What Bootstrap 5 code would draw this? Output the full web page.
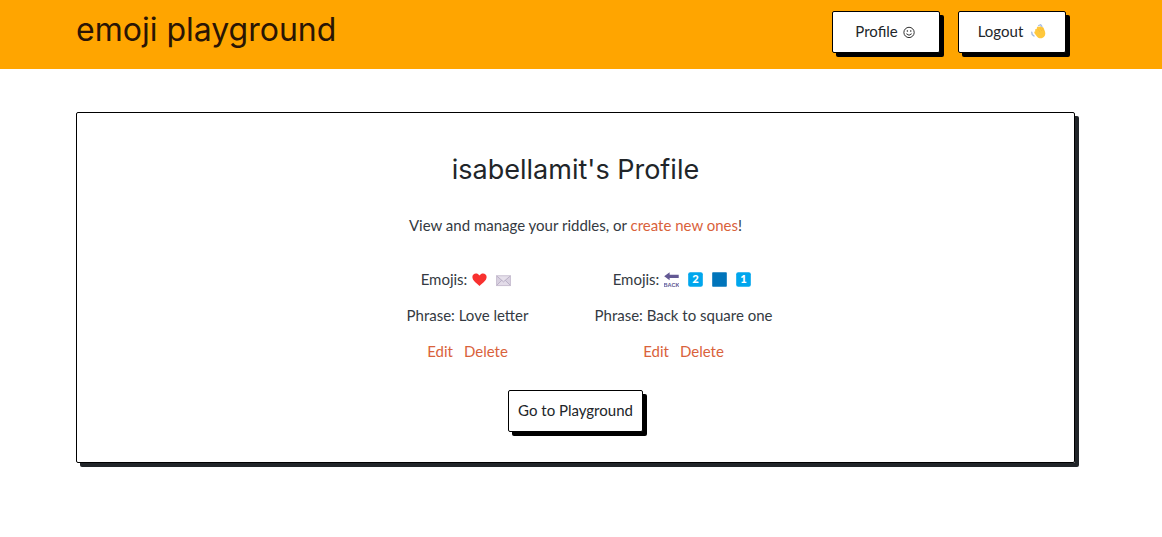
<!DOCTYPE html>
<html lang="en">
<head>
<meta charset="utf-8">
<meta name="viewport" content="width=device-width, initial-scale=1">
<title>emoji playground</title>
<link href="https://cdn.jsdelivr.net/npm/bootstrap@5.3.0/dist/css/bootstrap.min.css" rel="stylesheet">
<style>
  body { font-family: Lato, sans-serif; font-size: 15px; line-height: 20px; color: #343a42; background: #fff; }
  .page-gutter { padding-left: 76px; padding-right: 87px; }
  .site-header { background: #ffa500; min-height: 69px; padding-top: 11px; padding-bottom: 16px; }
  .site-title { font-family: Inter, sans-serif; font-size: 32px; line-height: 38px; color: #2a1505; text-decoration: none; }
  .header-actions { gap: 18px; margin-right: 9px; }
  .header-actions .btn-pop { width: 108px; }
  .btn-pop {
    --bs-btn-font-size: 15px; --bs-btn-line-height: 20px; --bs-btn-padding-x: 9px;
    --bs-btn-color: #212529; --bs-btn-bg: #fff; --bs-btn-border-color: #000; --bs-btn-border-radius: 2px;
    --bs-btn-hover-bg: #fff4dd; --bs-btn-hover-border-color: #000;
    padding-top: 9px; padding-bottom: 11px; box-shadow: 4px 4px 0 #000; white-space: nowrap;
  }
  .riddle-panel { margin-top: 43px; padding: 40px 16px 30px; border: 1px solid #000; border-radius: 2px; box-shadow: 4px 4px 0 #212529; }
  .panel-title { font-family: Inter, sans-serif; font-size: 27px; line-height: 34px; margin-bottom: 28px; font-weight: 400; color: #212529; }
  .riddle-grid { max-width: 432px; margin-top: 34px; margin-bottom: 29px; }
  .riddle-panel a { color: #d9623b; text-decoration: none; }
  .riddle-links { gap: 11px; }
  .emoji { width: 15px; height: 15px; flex: none; }
  .emoji-line { gap: 9px; padding-right: 3px; }
  .emoji-line .label-text { margin-right: -4px; }
</style>
</head>
<body>
<header class="site-header page-gutter d-flex flex-wrap justify-content-between">
  <a class="site-title" href="#">emoji playground</a>
  <nav class="header-actions d-flex" aria-label="Account">
    <button type="button" class="btn btn-pop d-flex align-items-center justify-content-center gap-1">Profile
      <svg class="emoji" viewBox="0 0 16 16" fill="none" stroke="#222" aria-hidden="true"><circle cx="7.500" cy="9" r="5.500"/><path d="M4.700 10.400Q7.500 13.600 10.300 10.400"/><circle cx="5.700" cy="7.500" r=".8" fill="#222" stroke="none"/><circle cx="9.300" cy="7.500" r=".8" fill="#222" stroke="none"/></svg>
    </button>
    <button type="button" class="btn btn-pop d-flex align-items-center justify-content-center gap-2">Logout
      <svg class="emoji" viewBox="0 0 16 16" aria-hidden="true"><path d="M4.400 6.800C4.400 5 5.500 5.200 6 5.600L6.300 3.700C6.700 2.300 8.200 2.300 8.600 3.200C9.400 2.100 10.800 2.300 11.400 3.200C12.700 2.800 13.500 3.800 13.800 5L15 8.300C15.800 11.300 14.800 14 12 15C9.300 15.700 6.900 14.500 5.700 12.400L3.700 9.800C3.100 8.400 3.900 7.600 4.700 7.800Z" fill="#ffc83d"/><path d="m7.400 5.500 2.200 3.200M9.500 4l2.200 3.600M11.700 4l1.700 3.400" stroke="#f2b530" stroke-width=".5"/><path d="M8.200 1.600 10.300.8l1.300 1.800M.8 8.800l.5 2.500 1.900 1.600" fill="none" stroke="#a5bbe0" stroke-width="1.400" stroke-linecap="round"/></svg>
    </button>
  </nav>
</header>

<main class="page-gutter pb-5">
  <section class="riddle-panel text-center">
    <h1 class="panel-title">isabellamit's Profile</h1>
    <p class="mb-0">View and manage your riddles, or <a href="#">create new ones</a>!</p>

    <div class="riddle-grid row g-0 mx-auto">
      <article class="col-6">
        <div class="emoji-line d-flex justify-content-center align-items-center mb-3">
          <span class="label-text">Emojis:</span>
          <svg class="emoji" viewBox="0 0 16 16" role="img" aria-label="red heart"><path d="M8 15C5.400 12.400.4 9.400.4 5.400.4 1.200 5.800.2 8 3.800 10.200.2 15.600 1.200 15.600 5.400 15.600 9.400 10.600 12.400 8 15Z" fill="#f8312f"/></svg>
          <svg class="emoji" viewBox="0 0 16 16" role="img" aria-label="envelope"><path d="M.5 4h15v10.500H.5Z" fill="#d8d0e0"/><path d="M.5 14.500 6 9h4l5.500 5.500Z" fill="#e3dce9"/><path d="M.5 4 8 10.500 15.500 4Z" fill="#e6e0eb"/><path d="m.5 4 7.500 6.500L15.500 4M.5 14.500 6 9M15.500 14.500 10 9" fill="none" stroke="#a79bb5" stroke-width=".7"/><path d="M.5 4h15v10.500H.5Z" fill="none" stroke="#c0b5ca" stroke-width=".8"/></svg>
        </div>
        <p class="mb-3">Phrase: Love letter</p>
        <div class="riddle-links d-flex justify-content-center"><a href="#">Edit</a><a href="#">Delete</a></div>
      </article>
      <article class="col-6">
        <div class="emoji-line d-flex justify-content-center align-items-center mb-3">
          <span class="label-text">Emojis:</span>
          <svg class="emoji" viewBox="0 0 16 16" role="img" aria-label="back arrow"><path d="M.2 4.600 6 .3v2.500h9.700v3.600H6v2.500Z" fill="#635994"/><text x="8" y="15.500" text-anchor="middle" font-family="Liberation Sans Narrow, Liberation Sans, sans-serif" font-weight="700" font-size="6" fill="#635994">BACK</text></svg>
          <svg class="emoji" viewBox="0 0 16 16" role="img" aria-label="keycap 2"><rect x=".2" y=".2" width="15.600" height="15.600" rx="2.200" fill="#00a6ed"/><text x="8" y="12" text-anchor="middle" font-family="Lato, sans-serif" font-weight="900" font-size="12" fill="#fff">2</text></svg>
          <svg class="emoji" viewBox="0 0 16 16" role="img" aria-label="blue square"><rect x=".2" y=".2" width="15.600" height="15.600" rx=".8" fill="#0074ba"/></svg>
          <svg class="emoji" viewBox="0 0 16 16" role="img" aria-label="keycap 1"><rect x=".2" y=".2" width="15.600" height="15.600" rx="2.200" fill="#00a6ed"/><text x="8" y="12" text-anchor="middle" font-family="Lato, sans-serif" font-weight="900" font-size="12" fill="#fff">1</text></svg>
        </div>
        <p class="mb-3">Phrase: Back to square one</p>
        <div class="riddle-links d-flex justify-content-center"><a href="#">Edit</a><a href="#">Delete</a></div>
      </article>
    </div>

    <button type="button" class="btn btn-pop">Go to Playground</button>
  </section>
</main>
<script src="https://cdn.jsdelivr.net/npm/bootstrap@5.3.0/dist/js/bootstrap.bundle.min.js"></script>
</body>
</html>
